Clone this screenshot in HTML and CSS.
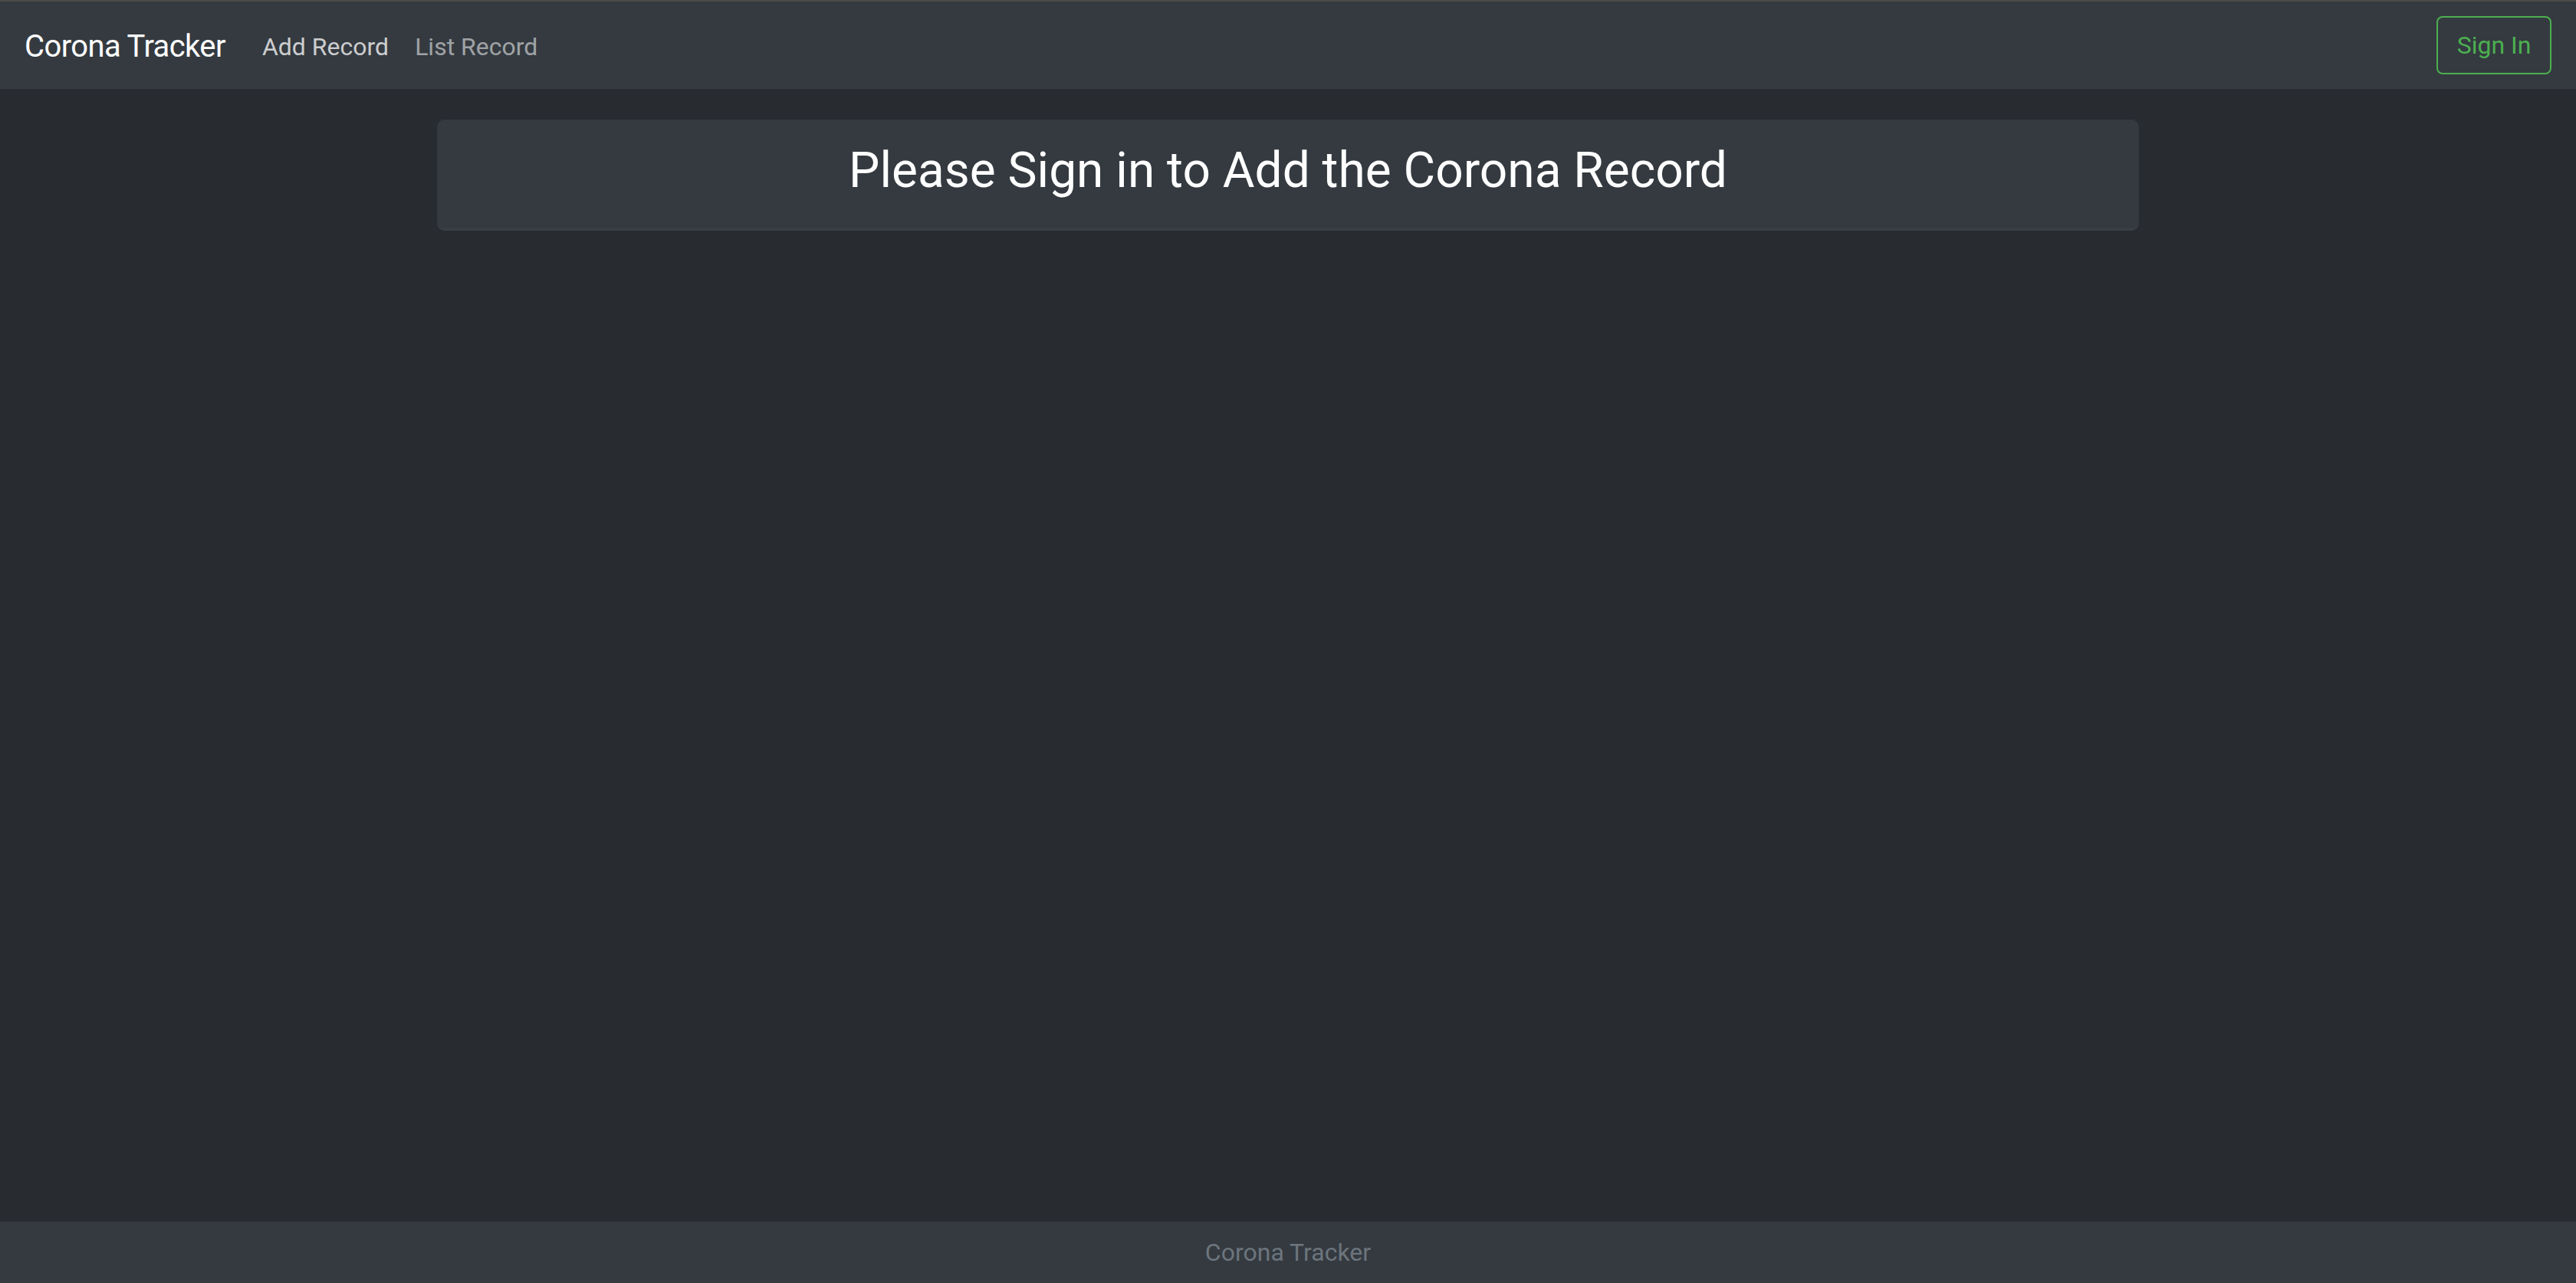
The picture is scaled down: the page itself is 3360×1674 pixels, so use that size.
FILE: index.html
```html
<!DOCTYPE html>
<html lang="en">
<head>
<meta charset="utf-8">
<title>Corona Tracker</title>
<link rel="stylesheet" href="styles.css">
</head>
<body>
<div class="app">
  <nav class="navbar">
    <div class="nav-left">
      <a class="brand" href="#">Corona Tracker</a>
      <ul class="nav-links">
        <li><a class="nav-link active" href="#">Add Record</a></li>
        <li><a class="nav-link" href="#">List Record</a></li>
      </ul>
    </div>
    <button class="btn-signin" type="button">Sign In</button>
  </nav>
  <main class="main">
    <div class="container">
      <div class="notice">
        <h2 class="notice-title">Please Sign in to Add the Corona Record</h2>
      </div>
    </div>
  </main>
  <footer class="footer">Corona Tracker</footer>
</div>
</body>
</html>
```
FILE: styles.css
```css
* { box-sizing: border-box; }
html, body { height: 100%; }
body {
  margin: 0;
  background: #282b30;
  font-family: Roboto, "Noto Sans", "Liberation Sans", sans-serif;
  color: #fff;
}
.app {
  min-height: 100vh;
  display: flex;
  flex-direction: column;
  border-top: 2px solid #4d4a4a;
}
.navbar {
  height: 114px;
  background: #343a40;
  display: flex;
  align-items: center;
  justify-content: space-between;
  padding: 0 32px 0 32px;
}
.nav-left {
  display: flex;
  align-items: center;
  padding-top: 3px;
}
.brand {
  color: #fff;
  text-decoration: none;
  font-size: 40px;
  letter-spacing: -0.6px;
  margin-right: 48px;
}
.nav-links {
  list-style: none;
  margin: 0;
  padding: 0;
  display: flex;
  gap: 34px;
}
.nav-link {
  color: rgba(255,255,255,0.55);
  text-decoration: none;
  font-size: 32px;
}
.nav-link.active { color: rgba(255,255,255,0.75); }
.btn-signin {
  background: transparent;
  border: 2px solid #4caf50;
  color: #4caf50;
  border-radius: 8px;
  font-family: inherit;
  font-size: 32px;
  height: 76px;
  width: 150px;
  padding: 0;
}
.main {
  flex: 1;
  padding-top: 40px;
}
.container {
  max-width: 2280px;
  margin: 0 auto;
  padding: 0 30px;
}
.notice {
  background: #343a40;
  border-radius: 10px;
  border-bottom: 3px solid #3a3f45;
  height: 145px;
  padding-top: 29px;
  text-align: center;
}
.notice-title {
  margin: 0;
  font-size: 64px;
  font-weight: 400;
  line-height: 1.2;
}
.footer {
  height: 80px;
  background: #343a40;
  color: #6c757d;
  font-size: 32px;
  display: flex;
  align-items: center;
  justify-content: center;
}
```
